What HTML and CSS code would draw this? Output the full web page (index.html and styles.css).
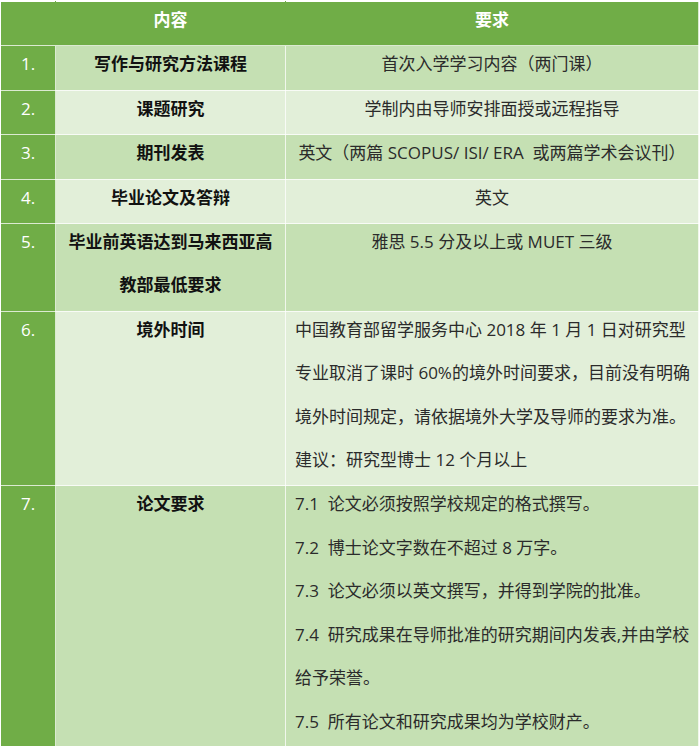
FILE: index.html
```html
<!DOCTYPE html>
<html lang="zh-CN">
<head>
<meta charset="utf-8">
<title>博士课程要求</title>
<link rel="stylesheet" href="styles.css">
</head>
<body>
<table class="req">
  <colgroup>
    <col class="c-num">
    <col class="c-item">
    <col class="c-desc">
  </colgroup>
  <thead>
    <tr class="head">
      <th><div class="t"></div></th>
      <th><div class="t">内容</div></th>
      <th><div class="t">要求</div></th>
    </tr>
  </thead>
  <tbody>
    <tr class="dark">
      <td class="num"><div class="t">1.</div></td>
      <td class="item"><div class="t">写作与研究方法课程</div></td>
      <td class="desc center"><div class="t">首次入学学习内容（两门课）</div></td>
    </tr>
    <tr class="light">
      <td class="num"><div class="t">2.</div></td>
      <td class="item"><div class="t">课题研究</div></td>
      <td class="desc center"><div class="t">学制内由导师安排面授或远程指导</div></td>
    </tr>
    <tr class="dark">
      <td class="num"><div class="t">3.</div></td>
      <td class="item"><div class="t">期刊发表</div></td>
      <td class="desc center"><div class="t">英文（两篇 SCOPUS/ ISI/ ERA&nbsp; 或两篇学术会议刊）</div></td>
    </tr>
    <tr class="light">
      <td class="num"><div class="t">4.</div></td>
      <td class="item"><div class="t">毕业论文及答辩</div></td>
      <td class="desc center"><div class="t">英文</div></td>
    </tr>
    <tr class="dark">
      <td class="num"><div class="t">5.</div></td>
      <td class="item"><div class="t">毕业前英语达到马来西亚高<br>教部最低要求</div></td>
      <td class="desc center"><div class="t">雅思 5.5 分及以上或 MUET 三级</div></td>
    </tr>
    <tr class="light">
      <td class="num"><div class="t">6.</div></td>
      <td class="item"><div class="t">境外时间</div></td>
      <td class="desc"><div class="t">中国教育部留学服务中心 2018 年 1 月 1 日对研究型<br>专业取消了课时 60%的境外时间要求，目前没有明确<br>境外时间规定，请依据境外大学及导师的要求为准。<br>建议：研究型博士 12 个月以上</div></td>
    </tr>
    <tr class="dark">
      <td class="num"><div class="t">7.</div></td>
      <td class="item"><div class="t">论文要求</div></td>
      <td class="desc"><div class="t">7.1&nbsp; 论文必须按照学校规定的格式撰写。<br>7.2&nbsp; 博士论文字数在不超过 8 万字。<br>7.3&nbsp; 论文必须以英文撰写，并得到学院的批准。<br>7.4&nbsp; 研究成果在导师批准的研究期间内发表,并由学校<br>给予荣誉。<br>7.5&nbsp; 所有论文和研究成果均为学校财产。</div></td>
    </tr>
  </tbody>
</table>
</body>
</html>
```

FILE: styles.css
```css
html, body {
  margin: 0;
  padding: 0;
  background: #ffffff;
}

body {
  font-family: "Open Sans", "Noto Sans CJK SC", sans-serif;
  font-size: 17px;
  color: #262626;
}

.req {
  width: 699px;
  border-collapse: collapse;
  table-layout: fixed;
  margin-top: 1px;
}

.c-num { width: 55px; }
.c-item { width: 230px; }

.req th,
.req td {
  border: 1px solid rgba(255, 255, 255, 0.75);
  padding: 0 9px;
  vertical-align: top;
  line-height: 43.4px;
  white-space: nowrap;
}

.t {
  margin: -4px 0 4px;
}

.head th {
  background: #70ad47;
  color: #ffffff;
  font-weight: 700;
  text-align: center;
  border-left-color: #70ad47;
  border-right-color: #70ad47;
}

.head th:first-child {
  border-left-color: rgba(255, 255, 255, 0.75);
}

.head th:last-child {
  border-right-color: rgba(255, 255, 255, 0.75);
}

.dark td { background: #c5e0b3; }
.light td { background: #e2efd9; }

.req td.num {
  background: #70ad47;
  color: #ffffff;
  text-align: center;
  padding: 0;
}

.item {
  font-weight: 700;
  color: #111111;
  text-align: center;
}

.desc {
  text-align: left;
  color: #2b2b2b;
}

.desc.center {
  text-align: center;
}
```
